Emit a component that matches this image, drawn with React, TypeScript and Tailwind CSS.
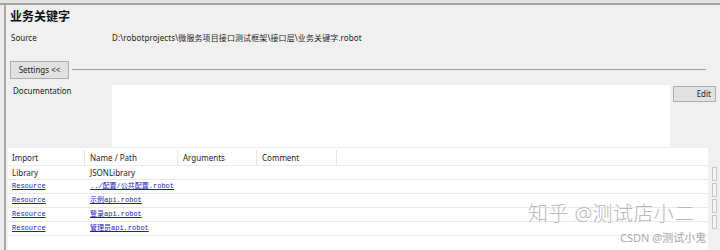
import React from "react";

const ui = { fontFamily: '"Noto Sans", "Open Sans", "Noto Sans CJK SC", sans-serif' };
const cjk = { fontFamily: '"Noto Sans", "Noto Sans CJK SC", sans-serif' };
const mono = { fontFamily: '"Liberation Mono", "Noto Sans CJK SC", monospace' };

const rows = [
  { kind: "Resource", path: "../配置/公共配置.robot" },
  { kind: "Resource", path: "示例api.robot" },
  { kind: "Resource", path: "登录api.robot" },
  { kind: "Resource", path: "管理员api.robot" },
];

export default function App() {
  return (
    <div className="w-[720px] h-[250px] bg-[#f0f0f0] relative overflow-hidden text-[#1e1e1e]" style={ui}>
      {/* top strip */}
      <div className="h-[3px] bg-[#e4e4e4]" />
      <div className="h-[2px] bg-[#a3a3a3]" />
      <div className="flex h-[245px]">
        <div className="w-[4px] bg-[#ececec]" />
        <div className="w-[2px] bg-[#a9a9a9]" />
        <div className="flex-1 flex flex-col">
          {/* title */}
          <div className="pl-[4px] pt-[4px] h-[24px] text-[12px] font-bold leading-[15px] text-[#111]" style={cjk}>
            业务关键字
          </div>
          {/* source */}
          <div className="flex items-center h-[16px] mt-[1px] text-[8px] leading-[10px]" style={cjk}>
            <div className="w-[106px] pl-[5px]">Source</div>
            <div className="tracking-[0.1px]">D:\robotprojects\微服务项目接口测试框架\接口层\业务关键字.robot</div>
          </div>
          {/* settings */}
          <div className="flex items-center mt-[14px] h-[19px]">
            <div className="ml-[4px] w-[59px] h-[18px] border border-[#adadad] bg-[#e1e1e1] flex items-center justify-center text-[8px]">
              Settings &lt;&lt;
            </div>
            <div className="ml-[3px] w-[634px] h-px bg-[#a0a0a0]" />
          </div>
          {/* documentation */}
          <div className="flex mt-[6px] h-[63px]">
            <div className="w-[106px] pl-[7px] pt-[1px] text-[8px] leading-[10px]">Documentation</div>
            <div className="w-[558px] h-[62px] bg-white" />
            <div className="ml-[3px] mt-[1px] w-[43px] h-[16px] border border-[#adadad] bg-[#e1e1e1] flex items-center justify-end pr-[4px] text-[8px]">
              Edit
            </div>
          </div>
          {/* table */}
          <div className="flex flex-1">
            <div className="ml-[2px] w-[700px] bg-white pt-[2px] text-[8px]">
              <div className="flex h-[16px] items-center border-b border-[#ececec]">
                <div className="w-[77px] pl-[4px] h-full flex items-center border-r border-[#e6e6e6]">Import</div>
                <div className="w-[93px] pl-[5px] h-full flex items-center border-r border-[#e6e6e6]">Name / Path</div>
                <div className="w-[79px] pl-[5px] h-full flex items-center border-r border-[#e6e6e6]">Arguments</div>
                <div className="w-[80px] pl-[5px] h-full flex items-center border-r border-[#e6e6e6]">Comment</div>
              </div>
              <div className="flex h-[14px] items-center border-b border-[#e8e8e8]">
                <div className="w-[77px] pl-[4px]">Library</div>
                <div className="w-[93px] pl-[5px]">JSONLibrary</div>
              </div>
              {rows.map((r, i) => (
                <div key={i} className="flex h-[14px] items-center border-b border-[#e8e8e8]">
                  <div className="w-[77px] pl-[4px] text-[7px] text-[#1a1ac8] underline" style={mono}>{r.kind}</div>
                  <div className="w-[93px] pl-[5px] text-[7px] text-[#1a1ac8] underline whitespace-nowrap" style={mono}>{r.path}</div>
                </div>
              ))}
            </div>
            <div className="flex-1 flex flex-col items-center pt-[19px] gap-[2px]">
              {[0, 1, 2, 3].map((i) => (
                <div key={i} className="w-[5px] h-[14px] border border-[#c8c8c8] bg-[#f4f4f4]" />
              ))}
            </div>
          </div>
        </div>
      </div>
      {/* watermarks */}
      <div
        className="absolute left-[528px] top-[201px] text-[20px] leading-[26px] tracking-[0.4px] font-light text-[#b8b8b8] whitespace-nowrap"
        style={{ ...cjk, textShadow: "0 0 1px #fff" }}
      >
        知乎 @测试店小二
      </div>
      <div
        className="absolute left-[620px] top-[231px] text-[11px] leading-[14px] text-[#a8a8a8] whitespace-nowrap"
        style={{ ...cjk, textShadow: "0 0 1px #fff" }}
      >
        CSDN @测试小鬼
      </div>
    </div>
  );
}
